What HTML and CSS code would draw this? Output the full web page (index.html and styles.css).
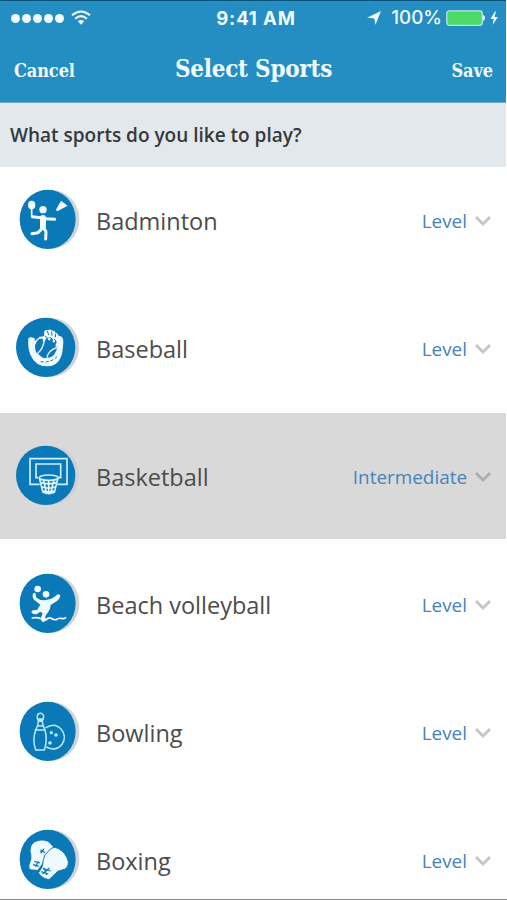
FILE: index.html
```html
<!DOCTYPE html>
<html lang="en">
<head>
<meta charset="utf-8">
<title>Select Sports</title>
<link rel="stylesheet" href="styles.css">
</head>
<body>
<main class="screen">
  <header class="top">
    <div class="status">
      <div class="signal">
        <i></i><i></i><i></i><i></i><i></i>
        <svg class="wifi" width="20" height="16" viewBox="0 0 20 16"><g fill="none" stroke="#f0fbff" stroke-width="2.1"><path d="M1 5.3Q10-2.3 19 5.3"/><path d="M4.2 8.7q5.8-5 11.6 0"/></g><path d="M6.8 11.2q3.2-2.6 6.4 0L10 14.7z" fill="#f0fbff"/></svg>
      </div>
      <time class="clock">9:41 AM</time>
      <div class="power">
        <svg class="arrow" width="14" height="14" viewBox="0 0 14 14"><path d="M0 6.8 14 0 8.4 14 7.4 7.4z" fill="#f0fbff"/></svg>
        <span class="percent">100%</span>
        <svg width="53" height="18" viewBox="0 0 53 18"><rect x=".8" y="1.8" width="35.5" height="14.5" rx="2.6" fill="#4cd964" stroke="#b5e3ec" stroke-width="1.3"/><path d="M37.5 6.5q2.2 2.5 0 5z" fill="#f0fbff" stroke="#f0fbff"/><path d="M49 2.5 44.4 10h3.4l-1.3 6 5.4-8h-3.4l1.4-5.5z" fill="#f0fbff"/></svg>
      </div>
    </div>
    <nav class="bar">
      <a class="action">Cancel</a>
      <h1 class="title">Select Sports</h1>
      <a class="action save">Save</a>
    </nav>
  </header>
  <h2 class="question">What sports do you like to play?</h2>
  <ul class="list">
    <li class="row">
      <svg class="icon" viewBox="0 0 240 240"><ellipse class="shade" cx="124" cy="118" rx="84" ry="88"/><ellipse class="disc" cx="113" cy="118" rx="84" ry="89"/>
        <g fill="#effaff"><ellipse cx="65" cy="75" rx="11" ry="13"/><circle cx="99" cy="89" r="11"/><path d="M139 87l14-25 20 15-24 13-5 3q-7 0-5-6z"/></g>
        <g fill="none" stroke="#effaff" stroke-linecap="round" stroke-linejoin="round"><path stroke-width="5" d="M65 85v23"/><path stroke-width="9" d="M67 110l25 3M107 116l27 2M97 145l-13 13-18 3M101 143l7 12-1 22"/><path stroke-width="18" d="M99 114v27"/></g></svg>
      <span class="name">Badminton</span><span class="level">Level</span><svg class="chevron" viewBox="0 0 18 12"><path d="M2 2l7 7 7-7"/></svg>
    </li>
    <li class="row">
      <svg class="icon" viewBox="0 0 240 240"><ellipse class="shade" cx="123" cy="118" rx="84" ry="88"/><ellipse class="disc" cx="107" cy="118" rx="89" ry="89"/>
        <path fill="#effaff" d="M55 92q2-6 9-4l10 3 1 8 14-13 14-1-1-13q4-8 11-5 8-5 12 1 9-2 11 6 9 1 8 8l11 4q7 6 4 28-3 61-47 61-36 0-51-35-8-19-6-48z"/>
        <path fill="#0b78b7" d="M78 133q-9-27 10-41l18 1 12-6 22 13q7 20-8 40-13 13-34 9z"/>
        <g fill="none" stroke="#effaff" stroke-width="4"><path d="M82 137q19-15 21-44M111 149q3-22 31-31"/><path stroke-width="7" d="M107 83l-6 17M120 84l-3 13M133 88l-2 15M146 95l-7 21"/></g>
        <g fill="none" stroke="#0b78b7" stroke-width="3"><path d="M112 69l4 12M125 71l1 12M137 77l-1 11M105 84l8 7M119 87l6 6M132 93l6 6"/><path stroke-dasharray="9 6" d="M92 161q29 5 49-15"/></g></svg>
      <span class="name">Baseball</span><span class="level">Level</span><svg class="chevron" viewBox="0 0 18 12"><path d="M2 2l7 7 7-7"/></svg>
    </li>
    <li class="row selected">
      <svg class="icon" viewBox="0 0 240 240"><ellipse class="shade" cx="123" cy="118" rx="84" ry="88"/><ellipse class="disc" cx="107" cy="118" rx="89" ry="89"/>
        <g fill="none" stroke="#cbf0ff" stroke-width="5"><path d="M89 145H60V68h111v77h-29M84 125h-6V84h74v41h-8"/><ellipse cx="116" cy="125" rx="28" ry="8"/><path d="M88 126l11 43q17 8 34 0l11-43"/></g>
        <g fill="none" stroke="#effaff" stroke-width="5"><path d="M92 140q24 6 48 0M95 153q21 6 42 0M99 165q17 5 34 0M101 134l8 36M116 135v38M131 134l-8 36"/></g></svg>
      <span class="name">Basketball</span><span class="level">Intermediate</span><svg class="chevron" viewBox="0 0 18 12"><path d="M2 2l7 7 7-7"/></svg>
    </li>
    <li class="row">
      <svg class="icon" viewBox="0 0 240 240"><ellipse class="shade" cx="124" cy="118" rx="84" ry="88"/><ellipse class="disc" cx="113" cy="118" rx="84" ry="89"/>
        <g fill="#effaff"><circle cx="83" cy="75" r="10"/><circle cx="108" cy="91" r="10"/><path d="M79 101q12 9 25 8 17-1 28-9l9-8q9-3 10 4-3 11-16 19l-13 8q0 13-9 23l-7 10 1 11q-6 12-13 3-2-12 4-22l-7-5-10 7q-9 2-16-4-2-6 5-7l12-1q2-7 9-16l-14-11q-10-5-9-20 3-8 9-2z"/></g>
        <path fill="none" stroke="#effaff" stroke-linecap="round" stroke-linejoin="round" stroke-width="5" d="M67 162q14-3 26 2M107 168q8-7 15-6 8 6 17 5 6-5 13-4 9 3 15-2"/></svg>
      <span class="name">Beach volleyball</span><span class="level">Level</span><svg class="chevron" viewBox="0 0 18 12"><path d="M2 2l7 7 7-7"/></svg>
    </li>
    <li class="row">
      <svg class="icon" viewBox="0 0 240 240"><ellipse class="shade" cx="124" cy="118" rx="84" ry="88"/><ellipse class="disc" cx="113" cy="118" rx="84" ry="89"/>
        <g fill="none" stroke="#b9ebfb" stroke-width="4.5" stroke-linejoin="round"><path d="M106 108q27-18 47 3 19 22 3 46-18 23-47 8"/><path d="M82 72q1-8 9-8t10 9q0 7-4 14 0 13 7 25 10 29-1 62H77q-11-31 1-62 7-13 7-25-4-7-3-15zM84 88h15M81 102h22M74 114h33"/></g>
        <g fill="#b9ebfb"><path d="M84 79h15l-2 9H86z"/><circle cx="124" cy="122" r="5"/><circle cx="138" cy="129" r="5.5"/><circle cx="120" cy="153" r="5.5"/></g></svg>
      <span class="name">Bowling</span><span class="level">Level</span><svg class="chevron" viewBox="0 0 18 12"><path d="M2 2l7 7 7-7"/></svg>
    </li>
    <li class="row">
      <svg class="icon" viewBox="0 0 240 240"><ellipse class="shade" cx="124" cy="118" rx="84" ry="88"/><ellipse class="disc" cx="113" cy="118" rx="84" ry="89"/>
        <path fill="#effaff" d="M64 78q5-13 24-16 25-3 36 13 8 7 9 13l-30 34-20 28-22-2q-6-7-1-18 6-11 4-24-5-14 0-28z"/>
        <path fill="#effaff" stroke="#0b78b7" stroke-width="3" d="M100 119q2-16 15-25 12-18 31-8 23 13 29 39 1 22-19 25-14 2-21 12l-18 17q-14-1-28-14-7-7 1-14 10-12 10-32z"/>
        <g fill="none" stroke="#0b78b7" stroke-width="3.5"><path d="M92 89l13 9M94 99l8-13M93 91v9M73 124l17 5M69 134l17 5M76 140l10-16M98 146l24 7M94 155l21 7M98 162l20-18M102 143l8 22"/></g></svg>
      <span class="name">Boxing</span><span class="level">Level</span><svg class="chevron" viewBox="0 0 18 12"><path d="M2 2l7 7 7-7"/></svg>
    </li>
  </ul>
</main>
</body>
</html>
```
FILE: styles.css
```css
* { box-sizing: border-box; }
body { margin: 0; background: #fff; font-family: "Open Sans", "Noto Sans", sans-serif; }
.screen { height: 900px; display: flex; flex-direction: column; overflow: hidden; border-bottom: 1px solid #858585; }
.top { flex: none; height: 103px; margin-right: 1px; background: #248dc1; border-top: 1px solid #075078; border-bottom: 1px solid #6aaac5; color: #f0fbff; }
.status { height: 34px; display: grid; grid-template-columns: 1fr auto 1fr; align-items: center; padding: 0 7px 0 11px; }
.signal { display: flex; align-items: center; gap: 2px; }
.signal i { width: 9px; height: 9px; border-radius: 50%; background: #f0fbff; }
.wifi { margin-left: 5px; }
.clock { font: 700 18.5px/34px Inter, sans-serif; letter-spacing: .9px; margin-right: -2px; }
.power { display: flex; align-items: center; justify-content: flex-end; }
.arrow { margin-right: 10px; }
.percent { font: 500 18.8px/34px Inter, sans-serif; margin-right: 4px; }
.bar { height: 68px; display: grid; grid-template-columns: 1fr auto 1fr; align-items: center; padding: 4px 13px 2px 14px; font-family: "Roboto Slab", "DejaVu Serif Condensed", "DejaVu Serif", serif; font-stretch: condensed; font-weight: 700; }
.action { font-size: 18px; letter-spacing: -.1px; }
.save { text-align: right; }
.title { margin: 0 0 4px; font-size: 24px; font-weight: 700; letter-spacing: -.25px; }
.question { flex: none; height: 64px; margin: 0 1px 0 0; padding-left: 10px; background: #e2e8eb; color: #35393c; font-size: 19px; line-height: 65px; font-weight: 600; white-space: nowrap; }
.list { flex: none; margin: -11px 1px 0 0; padding: 0; list-style: none; }
.row { height: 128px; display: flex; align-items: center; padding: 0 14px 0 10px; }
.selected { height: 126px; margin: 1px 0; background: #d9d9d9; }
.icon { flex: none; width: 80px; height: 80px; }
.shade { fill: #d1d3d6; }
.disc { fill: #0b78b7; }
.selected .shade { fill: #d0d0d2; }
.name { flex: 1; margin: 1px 0 0 6px; color: #4c4c4c; font-size: 23.5px; line-height: 36px; }
.level { margin-top: 2px; color: #4585b9; font-size: 18.9px; line-height: 30px; }
.chevron { width: 18px; height: 12px; margin: 2px 0 0 7px; fill: none; stroke: #c4c4c4; stroke-width: 2.8; }
.selected .chevron { stroke: #adadad; }
```
